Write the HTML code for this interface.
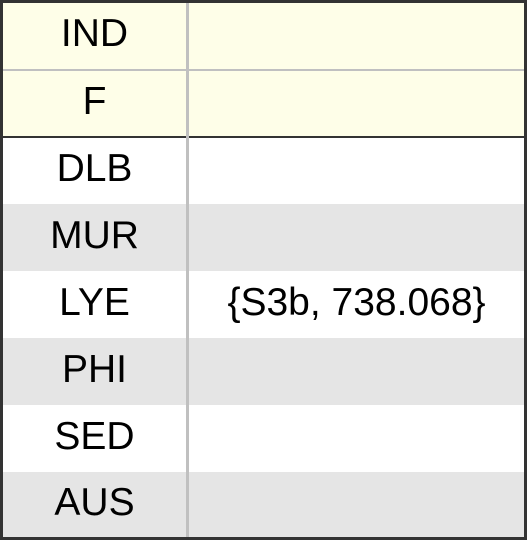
<!DOCTYPE html>
<html><head><style>
html,body{margin:0;padding:0;background:#fff;width:527px;height:543px;overflow:hidden}
.t{position:absolute;left:0;top:0;width:521px;height:534px;border:3px solid #333;}
.r{position:absolute;left:0;width:521px;}
.c{position:absolute;top:0;height:100%;box-sizing:border-box;padding-bottom:4px;display:flex;align-items:center;justify-content:center;font:39px "Liberation Sans",sans-serif;color:#000}
.a{left:0;width:183px}
.b{left:186px;width:335px}
</style></head><body>
<div class="t">
<div class="r" style="top:0;height:66px;background:#fefee8"><div class="c a">IND</div></div>
<div class="r" style="top:66px;height:2px;background:#c0c0c0"></div>
<div class="r" style="top:68px;height:65px;background:#fefee8"><div class="c a">F</div></div>
<div class="r" style="top:133px;height:2px;background:#333"></div>
<div class="r" style="top:135px;height:66px;background:#fff"><div class="c a">DLB</div></div>
<div class="r" style="top:201px;height:67px;background:#e5e5e5"><div class="c a">MUR</div></div>
<div class="r" style="top:268px;height:67px;background:#fff"><div class="c a">LYE</div><div class="c b">{S3b, 738.068}</div></div>
<div class="r" style="top:335px;height:67px;background:#e5e5e5"><div class="c a">PHI</div></div>
<div class="r" style="top:402px;height:67px;background:#fff"><div class="c a">SED</div></div>
<div class="r" style="top:469px;height:65px;background:#e5e5e5"><div class="c a">AUS</div></div>
<div style="position:absolute;left:183px;top:0;width:3px;height:534px;background:#c0c0c0"></div>
</div>
</body></html>
